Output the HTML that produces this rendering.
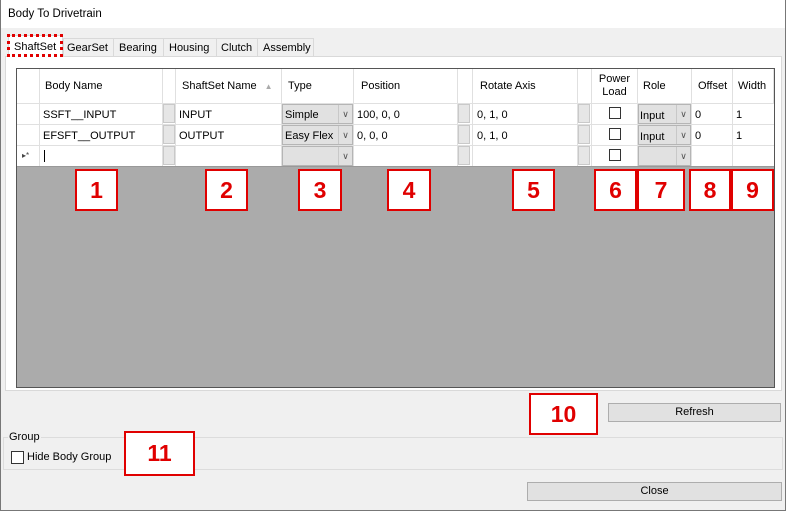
<!DOCTYPE html><html><head><style>
*{margin:0;padding:0;box-sizing:border-box}
body{width:786px;height:511px;background:#f0f0f0;font-family:"Liberation Sans",sans-serif;font-size:11px;color:#000;position:relative;overflow:hidden}
.a{position:absolute}
.t{white-space:nowrap}
.num{position:absolute;border:2px solid #e00000;background:#fff;color:#e00000;font-weight:bold;font-size:23px;text-align:center;display:flex;align-items:center;justify-content:center}
.hd{position:absolute;top:0;height:34px;border-right:1px solid #e0e0e0;display:flex;align-items:center}
.vl{position:absolute;top:34px;width:1px;height:63px;background:#e0e0e0}
.hl{position:absolute;left:0;width:757px;height:1px;background:#e0e0e0}
.cb{position:absolute;width:12px;height:12px;border:1px solid #333;background:#fff}
.btn{position:absolute;background:#e1e1e1;border:1px solid #adadad;text-align:center}
.dd{position:absolute;background:#e1e1e1;border:1px solid #b5b5b5}
.dd span{position:absolute;right:0;top:0;width:14px;height:100%;border-left:1px solid #c8c8c8;font-size:9px;text-align:center;color:#555}
.gb{position:absolute;background:#e6e6e6;border:1px solid #c9c9c9;width:12px;height:19px}
.tab{font-size:11px}
</style></head><body>
<div class="a" style="left:0;top:0;width:786px;height:28px;background:#fff"></div>
<div class="a t" style="left:8px;top:8px;font-size:11.5px">Body To Drivetrain</div>
<div class="a" style="left:0;top:0;width:786px;height:511px;border:1px solid #777;border-top:none"></div>
<div class="a" style="left:5px;top:56px;width:777px;height:335px;background:#fff;border:1px solid #d9d9d9"></div>
<div class="a" style="left:8px;top:35px;width:55px;height:22px;background:#fff;border:1px solid #d9d9d9;border-bottom:none"></div>
<div class="a t tab" style="left:14px;top:41px">ShaftSet</div>
<div class="a" style="left:7px;top:34px;width:56px;height:23px;border:3px dotted #e00000"></div>
<div class="a" style="left:63px;top:38px;width:251px;height:18px;border:1px solid #d9d9d9;border-bottom:none;background:#f0f0f0"></div>
<div class="a t tab" style="left:67px;top:42px">GearSet</div>
<div class="a" style="left:113px;top:38px;width:1px;height:18px;background:#d9d9d9"></div>
<div class="a t tab" style="left:119px;top:42px">Bearing</div>
<div class="a" style="left:163px;top:38px;width:1px;height:18px;background:#d9d9d9"></div>
<div class="a t tab" style="left:169px;top:42px">Housing</div>
<div class="a" style="left:216px;top:38px;width:1px;height:18px;background:#d9d9d9"></div>
<div class="a t tab" style="left:221px;top:42px">Clutch</div>
<div class="a" style="left:257px;top:38px;width:1px;height:18px;background:#d9d9d9"></div>
<div class="a t tab" style="left:263px;top:42px">Assembly</div>
<div class="a" style="left:16px;top:68px;width:759px;height:320px;background:#ababab;border:1px solid #555">
 <div class="a" style="left:0;top:0;width:757px;height:97px;background:#fff"></div>
 <div class="hd" style="left:0;width:23px"></div>
 <div class="hd" style="left:23px;width:123px;padding-left:5px">Body Name</div>
 <div class="hd" style="left:146px;width:13px"></div>
 <div class="hd" style="left:159px;width:106px;padding-left:6px">ShaftSet Name<span style="color:#aaa;font-size:8px;margin-left:8px">▲</span></div>
 <div class="hd" style="left:265px;width:72px;padding-left:6px">Type</div>
 <div class="hd" style="left:337px;width:104px;padding-left:7px">Position</div>
 <div class="hd" style="left:441px;width:15px"></div>
 <div class="hd" style="left:456px;width:105px;padding-left:7px">Rotate Axis</div>
 <div class="hd" style="left:561px;width:14px"></div>
 <div class="hd" style="left:575px;width:46px;justify-content:center;text-align:center;line-height:13px">Power<br>Load</div>
 <div class="hd" style="left:621px;width:54px;padding-left:5px">Role</div>
 <div class="hd" style="left:675px;width:41px;padding-left:6px">Offset</div>
 <div class="hd" style="left:716px;width:41px;padding-left:5px">Width</div>
 <div class="hl" style="top:34px"></div><div class="hl" style="top:55px"></div><div class="hl" style="top:76px"></div><div class="hl" style="top:97px;background:#999"></div>
 <div class="vl" style="left:22px"></div><div class="vl" style="left:145px"></div><div class="vl" style="left:158px"></div><div class="vl" style="left:264px"></div><div class="vl" style="left:336px"></div><div class="vl" style="left:440px"></div><div class="vl" style="left:455px"></div><div class="vl" style="left:560px"></div><div class="vl" style="left:574px"></div><div class="vl" style="left:620px"></div><div class="vl" style="left:674px"></div><div class="vl" style="left:715px"></div>
 <div class="gb" style="left:146px;top:35px"></div><div class="gb" style="left:146px;top:56px"></div><div class="gb" style="left:146px;top:77px"></div>
 <div class="gb" style="left:441px;top:35px"></div><div class="gb" style="left:441px;top:56px"></div><div class="gb" style="left:441px;top:77px"></div>
 <div class="gb" style="left:561px;top:35px"></div><div class="gb" style="left:561px;top:56px"></div><div class="gb" style="left:561px;top:77px"></div>
 <div class="a t" style="left:26px;top:40px">SSFT__INPUT</div><div class="a t" style="left:26px;top:61px">EFSFT__OUTPUT</div>
 <div class="a" style="left:27px;top:81px;width:1px;height:12px;background:#000"></div>
 <div class="a t" style="left:5px;top:82px;font-size:8px;color:#444">▸*</div>
 <div class="a t" style="left:162px;top:40px">INPUT</div><div class="a t" style="left:162px;top:61px">OUTPUT</div>
 <div class="dd" style="left:265px;top:35px;width:71px;height:20px"><span style="line-height:18px">∨</span></div><div class="a t" style="left:268px;top:40px">Simple</div>
 <div class="dd" style="left:265px;top:56px;width:71px;height:20px"><span style="line-height:18px">∨</span></div><div class="a t" style="left:268px;top:61px">Easy Flex</div>
 <div class="dd" style="left:265px;top:77px;width:71px;height:20px"><span style="line-height:18px">∨</span></div>
 <div class="a t" style="left:340px;top:40px">100, 0, 0</div><div class="a t" style="left:340px;top:61px">0, 0, 0</div>
 <div class="a t" style="left:460px;top:40px">0, 1, 0</div><div class="a t" style="left:460px;top:61px">0, 1, 0</div>
 <div class="cb" style="left:592px;top:38px"></div><div class="cb" style="left:592px;top:59px"></div><div class="cb" style="left:592px;top:80px"></div>
 <div class="dd" style="left:621px;top:35px;width:53px;height:20px"><span style="line-height:18px">∨</span></div><div class="a t" style="left:623px;top:41px">Input</div>
 <div class="dd" style="left:621px;top:56px;width:53px;height:20px"><span style="line-height:18px">∨</span></div><div class="a t" style="left:623px;top:62px">Input</div>
 <div class="dd" style="left:621px;top:77px;width:53px;height:20px"><span style="line-height:18px">∨</span></div>
 <div class="a t" style="left:678px;top:40px">0</div><div class="a t" style="left:678px;top:61px">0</div>
 <div class="a t" style="left:719px;top:40px">1</div><div class="a t" style="left:719px;top:61px">1</div>
</div>
<div class="num" style="left:75px;top:169px;width:43px;height:42px">1</div>
<div class="num" style="left:205px;top:169px;width:43px;height:42px">2</div>
<div class="num" style="left:298px;top:169px;width:44px;height:42px">3</div>
<div class="num" style="left:387px;top:169px;width:44px;height:42px">4</div>
<div class="num" style="left:512px;top:169px;width:43px;height:42px">5</div>
<div class="num" style="left:594px;top:169px;width:43px;height:42px">6</div>
<div class="num" style="left:637px;top:169px;width:48px;height:42px">7</div>
<div class="num" style="left:689px;top:169px;width:42px;height:42px">8</div>
<div class="num" style="left:731px;top:169px;width:43px;height:42px">9</div>
<div class="btn" style="left:608px;top:403px;width:173px;height:19px;line-height:17px">Refresh</div>
<div class="num" style="left:529px;top:393px;width:69px;height:42px">10</div>
<div class="a" style="left:3px;top:437px;width:780px;height:33px;border:1px solid #dcdcdc"></div>
<div class="a t" style="left:8px;top:431px;background:#f0f0f0;padding:0 1px">Group</div>
<div class="cb" style="left:11px;top:451px;width:13px;height:13px"></div>
<div class="a t" style="left:27px;top:451px">Hide Body Group</div>
<div class="num" style="left:124px;top:431px;width:71px;height:45px">11</div>
<div class="btn" style="left:527px;top:482px;width:255px;height:19px;line-height:17px">Close</div>
</body></html>
